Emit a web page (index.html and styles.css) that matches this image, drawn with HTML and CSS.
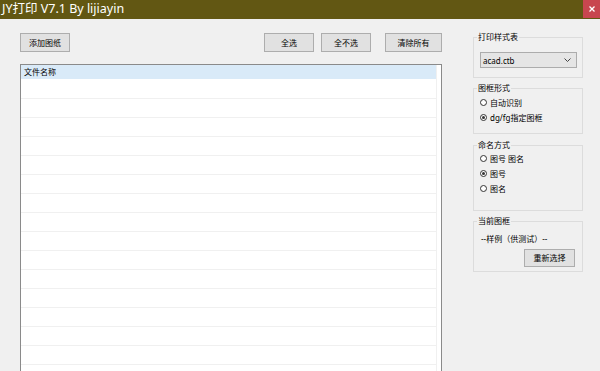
FILE: index.html
```html
<!DOCTYPE html>
<html lang="zh-CN">
<head>
<meta charset="utf-8">
<title>JY打印 V7.1 By lijiayin</title>
<link rel="stylesheet" href="styles.css">
</head>
<body>
<div class="window">
  <div class="titlebar">
    <span class="title">JY打印 V7.1 By lijiayin</span>
    <span class="close">
      <svg width="6" height="6" viewBox="0 0 6 6"><path d="M0.5 0.5L5.5 5.5M5.5 0.5L0.5 5.5" stroke="#fff" stroke-width="1.3"/></svg>
    </span>
  </div>
  <div class="content">
    <div class="left">
      <div class="toolbar">
        <button class="btn btn-add">添加图纸</button>
        <div class="spacer"></div>
        <button class="btn btn-all">全选</button>
        <button class="btn btn-none">全不选</button>
        <button class="btn btn-clear">清除所有</button>
      </div>
      <div class="list">
        <div class="cols">
          <div class="list-head">文件名称</div>
          <div class="row first"></div>
          <div class="row"></div>
          <div class="row"></div>
          <div class="row"></div>
          <div class="row"></div>
          <div class="row"></div>
          <div class="row"></div>
          <div class="row"></div>
          <div class="row"></div>
          <div class="row"></div>
          <div class="row"></div>
          <div class="row"></div>
          <div class="row"></div>
          <div class="row"></div>
          <div class="row"></div>
          <div class="row"></div>
        </div>
      </div>
    </div>
    <div class="right">
      <fieldset class="group g1">
        <legend>打印样式表</legend>
        <div class="select">
          <span>acad.ctb</span>
          <svg width="7" height="4" viewBox="0 0 7 4"><path d="M0.5 0.5L3.5 3.5L6.5 0.5" fill="none" stroke="#444" stroke-width="1"/></svg>
        </div>
      </fieldset>
      <fieldset class="group g2">
        <legend>图框形式</legend>
        <div class="radios">
          <div class="radio"><span class="dot"></span>自动识别</div>
          <div class="radio checked"><span class="dot"></span>dg/fg指定图框</div>
        </div>
      </fieldset>
      <fieldset class="group g3">
        <legend>命名方式</legend>
        <div class="radios">
          <div class="radio"><span class="dot"></span>图号 图名</div>
          <div class="radio checked"><span class="dot"></span>图号</div>
          <div class="radio"><span class="dot"></span>图名</div>
        </div>
      </fieldset>
      <fieldset class="group g4">
        <legend>当前图框</legend>
        <div class="sample">--样例（供测试）--</div>
        <button class="btn btn-reselect">重新选择</button>
      </fieldset>
    </div>
  </div>
</div>
</body>
</html>
```
FILE: styles.css
```css
* { box-sizing: border-box; }
html, body {
  margin: 0;
  padding: 0;
  width: 600px;
  height: 371px;
  overflow: hidden;
  background: #f0f0f0;
  font-family: "Noto Sans", "Noto Sans CJK SC", sans-serif;
  font-size: 8px;
  color: #000;
}
.window { width: 600px; height: 371px; overflow: hidden; }
.titlebar {
  height: 19px;
  background: #625713;
  display: flex;
  align-items: flex-start;
  justify-content: space-between;
}
.title {
  color: #fff;
  font-size: 12.5px;
  line-height: 18px;
  padding-left: 2px;
}
.close {
  width: 17px;
  height: 18px;
  background: #c8464f;
  display: flex;
  align-items: center;
  justify-content: center;
}
.content { display: flex; align-items: flex-start; }
.left { padding-left: 20px; width: 442px; }
.toolbar {
  display: flex;
  margin-top: 14px;
  height: 19px;
}
.spacer { flex: 1; }
.btn {
  font-family: inherit;
  font-size: 8px;
  color: #000;
  background: #e1e1e1;
  border: 1px solid #adadad;
  padding: 0;
  height: 19px;
  width: 50px;
  line-height: 17px;
  text-align: center;
}
.btn-none { margin-left: 7px; }
.btn-clear { margin-left: 14px; width: 57px; }
.list {
  margin-top: 12px;
  width: 422px;
  height: 330px;
  border: 1px solid #8a8a8a;
  background: #fff;
  overflow: hidden;
}
.cols {
  width: 416px;
  height: 100%;
  border-right: 1px solid #f0f0f0;
}
.list-head {
  height: 14px;
  background: #d9eaf8;
  line-height: 14px;
  padding-left: 3px;
}
.row {
  height: 19px;
  border-bottom: 1px solid #f0f0f0;
}
.row.first { height: 20px; }
.right { margin-left: 31px; width: 110px; }
.group {
  margin: 3px 0 0 0;
  padding: 0 5px 0 6px;
  border: 1px solid #dcdcdc;
  min-width: 0;
  width: 110px;
}
.group legend {
  margin-left: -3px;
  padding: 0 1px;
  line-height: 14px;
  font-size: 8px;
}
.g1 { margin-top: 11px; padding-bottom: 9px; }
.g2 { padding-bottom: 8px; }
.g3 { margin-top: 4px; padding-bottom: 14px; }
.g4 { padding-bottom: 4px; }
.select {
  margin-top: 8px;
  width: 97px;
  height: 16px;
  background: #e5e5e5;
  border: 1px solid #acacac;
  display: flex;
  align-items: center;
  justify-content: space-between;
  padding: 0 5px 0 2px;
}
.radios { margin-top: 0; }
.g3 .radios { margin-top: -1px; }
.radio {
  display: flex;
  align-items: center;
  height: 15px;
}
.dot {
  width: 7px;
  height: 7px;
  border: 1px solid #333;
  border-radius: 50%;
  margin-right: 3px;
  display: flex;
  align-items: center;
  justify-content: center;
  background: #fff;
}
.radio.checked .dot::after {
  content: "";
  width: 3px;
  height: 3px;
  border-radius: 50%;
  background: #333;
}
.sample {
  margin-top: 4px;
  line-height: 14px;
  padding-left: 1px;
}
.btn-reselect {
  display: block;
  margin: 3px 0 0 44px;
  width: 51px;
  height: 18px;
  line-height: 16px;
}
```
